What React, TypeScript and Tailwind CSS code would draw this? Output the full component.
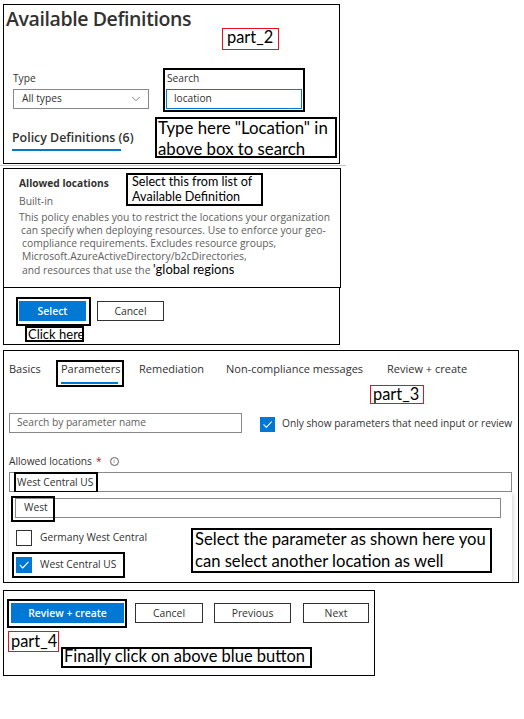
import { ChevronDown } from 'lucide-react';

const ui = "font-['Open_Sans',sans-serif]";
const note = "font-['Lato',sans-serif] text-black";

function Tick({ size = 15 }: { size?: number }) {
  return (
    <svg width={size} height={size} viewBox="0 0 16 16" fill="none">
      <path d="M4 8.2 6.7 11 12.2 5.2" stroke="#fff" strokeWidth="1.1" strokeLinecap="round" strokeLinejoin="round" />
    </svg>
  );
}

function Btn({ label, width, primary }: { label: string; width: string; primary?: boolean }) {
  return (
    <div
      className={`flex h-[20px] items-center justify-center text-[10.4px] leading-none ${width} ${
        primary ? 'bg-[#0078d4] font-semibold text-white' : 'border border-[#323130] text-[#323130]'
      }`}
    >
      {label}
    </div>
  );
}

function PartLabel({ text, className }: { text: string; className: string }) {
  return (
    <div className={`border border-[#e81123] pl-[2px] text-[16.4px] leading-[15px] ${note} ${className}`}>
      {text}
    </div>
  );
}

export default function App() {
  return (
    <div className={`relative h-[719px] w-[524px] overflow-hidden bg-white text-[#323130] ${ui}`}>
      {/* part 1: available definitions */}
      <section className="relative ml-[3px] mt-[4px] h-[160px] w-[337px] border border-black">
        <h1 className="ml-[2px] mt-[2px] text-[19.5px] font-semibold leading-[24px] tracking-[-0.4px]">
          Available Definitions
        </h1>
        <PartLabel text="part_2" className="absolute left-[218px] top-[23px] h-[22px] w-[57px] pl-[4px]" />

        <div className="mt-[37px] flex items-start text-[10.2px]">
          <div className="ml-[9px] mt-[2px] w-[136px]">
            <div className="leading-[16px]">Type</div>
            <div className="mt-[3px] flex h-[20px] items-center justify-between border border-[#8a8886] pl-[8px] pr-[5px]">
              All types
              <ChevronDown size={14} strokeWidth={1} className="text-[#323130]" />
            </div>
          </div>
          <div className="ml-[14px] h-[44px] w-[142px] border-2 border-black">
            <div className="pl-[2px] leading-[16px]">Search</div>
            <div className="ml-[1px] mt-[3px] flex h-[20px] w-[136px] items-center border border-[#0078d4] pl-[7px]">
              location
            </div>
          </div>
        </div>

        <div className="mt-[5px] flex items-start">
          <div className="ml-[8px] w-[109px] pt-[13px]">
            <div className="whitespace-nowrap text-[12.4px] font-semibold leading-[16px]">Policy Definitions (6)</div>
            <div className="mt-[3px] h-[2px] bg-[#0078d4]" />
          </div>
          <div className={`ml-[34px] h-[41px] w-[182px] whitespace-nowrap border-2 border-black pl-[1px] text-[16.8px] leading-[21px] ${note}`}>
            <div className="-mt-[2px]">
              Type here "Location" in
              <br />
              above box to search
            </div>
          </div>
        </div>
      </section>
      <div className="mt-px h-px w-[346px] bg-[#c8c6c4]" />

      {/* part 2: definition details */}
      <section className="relative ml-[3px] mt-[2px] h-[120px] w-[338px] border border-black text-[10.3px]">
        <div className="ml-[15px] mt-[7px] text-[10.2px] font-bold leading-[14px]">Allowed locations</div>
        <div className="ml-[15px] mt-[4px] leading-[14px] text-[#605e5c]">Built-in</div>
        <div className="mt-[3px] whitespace-nowrap leading-[13px] text-[#605e5c]">
          <div className="pl-[15px]">This policy enables you to restrict the locations your organization</div>
          <div className="pl-[17px]">can specify when deploying resources. Use to enforce your geo-</div>
          <div className="pl-[18px]">compliance requirements. Excludes resource groups,</div>
          <div className="pl-[18px]">Microsoft.AzureActiveDirectory/b2cDirectories,</div>
          <div className="pl-[18px]">
            and resources that use the <span className={`text-[13px] leading-none ${note}`}>'global regions</span>
          </div>
        </div>
        <div className={`absolute left-[122px] top-[4px] h-[33px] w-[137px] whitespace-nowrap border-2 border-black pl-[4px] text-[12.6px] leading-[14.5px] ${note}`}>
          Select this from list of
          <br />
          Available Definition
        </div>
      </section>
      <section className="ml-[3px] h-[57px] w-[337px] border-x border-b border-black pt-[9px]">
        <div className="flex items-start">
          <div className="ml-[12px] h-[29px] w-[75px] border-2 border-black pl-[1px] pt-[2px]">
            <Btn label="Select" width="w-[67px]" primary />
          </div>
          <div className="ml-[6px] mt-[4px]">
            <Btn label="Cancel" width="w-[67px]" />
          </div>
        </div>
        <div className={`ml-[21px] h-[16px] w-[59px] whitespace-nowrap border-2 border-black pl-[1px] text-[13px] leading-[12px] ${note}`}>
          Click here
        </div>
      </section>

      {/* part 3: parameters */}
      <section className="relative ml-[3px] mt-[5px] h-[233px] w-[516px] overflow-hidden border border-black">
        <div className="mt-[9px] flex items-start text-[11px] leading-[14px]">
          <div className="ml-[5px] mt-[2px] w-[47px]">Basics</div>
          <div className="h-[27px] w-[68px] border-2 border-black pl-[3px]">
            <div>Parameters</div>
            <div className="mt-[6px] h-[2px] w-[57px] bg-[#0078d4]" />
          </div>
          <div className="ml-[15px] mt-[2px] w-[87px]">Remediation</div>
          <div className="mt-[2px] w-[161px]">Non-compliance messages</div>
          <div className="mt-[2px]">Review + create</div>
        </div>
        <PartLabel text="part_3" className="absolute left-[366px] top-[34px] h-[19px] w-[54px]" />

        <div className="mt-[26px] flex items-start text-[10.2px]">
          <div className="ml-[5px] flex h-[20px] w-[233px] items-center border border-[#8a8886] pl-[7px] text-[#605e5c]">
            Search by parameter name
          </div>
          <div className="ml-[18px] mt-[4px] h-[15px] w-[15px] bg-[#0078d4]">
            <Tick />
          </div>
          <div className="ml-[7px] mt-[2px] whitespace-nowrap leading-[16px]">
            Only show parameters that need input or review
          </div>
        </div>

        <div className="ml-[5px] mt-[20px] flex items-center text-[10.2px] leading-[16px]">
          Allowed locations
          <span className="ml-[4px] text-[#a4262c]">*</span>
          <span className="ml-[8px] flex h-[9px] w-[9px] items-center justify-center rounded-full border border-[#605e5c] text-[6px] leading-none text-[#605e5c]">
            i
          </span>
        </div>

        <div className="relative ml-[5px] mt-[3px] h-[20px] w-[503px] border border-[#8a8886] text-[10.2px]">
          <div className="absolute -top-[1px] left-[4px] h-[21px] w-[84px] whitespace-nowrap border-2 border-black pl-[1px] leading-[16px]">
            West Central US
          </div>
        </div>

        <div className="relative ml-[5px] h-[100px] w-[503px] bg-white text-[10.2px] shadow-[1px_2px_4px_rgba(0,0,0,0.18)]">
          <div className="ml-[6px] pt-[6px]">
            <div className="flex h-[20px] w-[486px] items-center border border-[#8a8886] pl-[8px]">West</div>
          </div>
          <div className="absolute left-[2px] top-[4px] h-[26px] w-[44px] border-2 border-black" />
          <div className="ml-[7px] mt-[12px] flex items-center">
            <div className="h-[16px] w-[16px] border border-[#323130]" />
            <span className="ml-[8px]">Germany West Central</span>
          </div>
          <div className="ml-[7px] mt-[11px] flex items-center">
            <div className="h-[16px] w-[16px] bg-[#0078d4]">
              <Tick size={16} />
            </div>
            <span className="ml-[8px]">West Central US</span>
          </div>
          <div className="absolute left-[3px] top-[60px] h-[26px] w-[113px] border-2 border-black" />
        </div>

        <div className={`absolute left-[187px] top-[177px] h-[45px] w-[301px] whitespace-nowrap border-2 border-black pl-[2px] text-[16.6px] leading-[22px] ${note}`}>
          <div className="-mt-[2px]">
            Select the parameter as shown here you
            <br />
            can select another location as well
          </div>
        </div>
      </section>

      {/* part 4: review + create */}
      <section className="ml-[3px] mt-[7px] h-[86px] w-[372px] border border-black">
        <div className="mt-[8px] flex items-start">
          <div className="ml-[3px] h-[29px] w-[120px] border-2 border-black pl-[2px] pt-[2px]">
            <Btn label="Review + create" width="w-[113px]" primary />
          </div>
          <div className="ml-[8px] mt-[4px]">
            <Btn label="Cancel" width="w-[68px]" />
          </div>
          <div className="ml-[11px] mt-[4px]">
            <Btn label="Previous" width="w-[77px]" />
          </div>
          <div className="ml-[12px] mt-[4px]">
            <Btn label="Next" width="w-[66px]" />
          </div>
        </div>
        <div className="mt-[3px] flex items-start">
          <PartLabel text="part_4" className="ml-[4px] h-[21px] w-[51px] pt-[1px]" />
          <div className={`ml-[2px] mt-[16px] h-[21px] w-[251px] whitespace-nowrap border-2 border-black pl-[1px] text-[16.5px] leading-[17px] ${note}`}>
            <div className="-mt-[1px]">Finally click on above blue button</div>
          </div>
        </div>
      </section>
    </div>
  );
}
